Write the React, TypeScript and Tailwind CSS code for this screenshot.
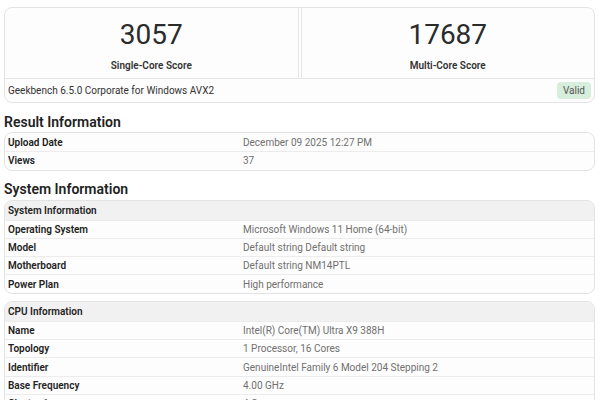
import React from "react";

type Row = { label: string; value: string };

const resultRows: Row[] = [
  { label: "Upload Date", value: "December 09 2025 12:27 PM" },
  { label: "Views", value: "37" },
];

const systemRows: Row[] = [
  { label: "Operating System", value: "Microsoft Windows 11 Home (64-bit)" },
  { label: "Model", value: "Default string Default string" },
  { label: "Motherboard", value: "Default string NM14PTL" },
  { label: "Power Plan", value: "High performance" },
];

const cpuRows: Row[] = [
  { label: "Name", value: "Intel(R) Core(TM) Ultra X9 388H" },
  { label: "Topology", value: "1 Processor, 16 Cores" },
  { label: "Identifier", value: "GenuineIntel Family 6 Model 204 Stepping 2" },
  { label: "Base Frequency", value: "4.00 GHz" },
  { label: "Cluster 1", value: "4 Cores" },
];

function InfoTable({ title, rows }: { title?: string; rows: Row[] }) {
  return (
    <div className="border border-[#e3e3e3] rounded-lg overflow-hidden bg-[#fdfdfd]">
      {title && (
        <div className="h-[19px] bg-[#f1f1f1] px-[3px] flex items-center text-[10px] font-semibold text-[#222]">
          {title}
        </div>
      )}
      {rows.map((row, i) => (
        <div
          key={row.label}
          className={`grid grid-cols-[235px_1fr] h-[18.3px] items-center px-[3px] text-[10px] ${
            i > 0 || title ? "border-t border-[#ececec]" : ""
          }`}
        >
          <span className="font-semibold text-[#222]">{row.label}</span>
          <span className="text-[#707070]">{row.value}</span>
        </div>
      ))}
    </div>
  );
}

function ScoreCell({ score, label }: { score: string; label: string }) {
  return (
    <div className="flex flex-col items-center pt-[10px]">
      <div className="text-[28px] leading-[34px] text-[#2b2b2b]">{score}</div>
      <div className="mt-[6px] text-[10px] font-semibold text-[#333]">{label}</div>
    </div>
  );
}

export default function App() {
  return (
    <div className="w-[600px] h-[400px] overflow-hidden bg-white px-[4px] pt-[7px] font-['Roboto',sans-serif] text-[#333]">
      <div className="w-[591px] border border-[#e3e3e3] rounded-lg bg-[#fdfdfd]">
        <div className="grid grid-cols-2 gap-[2px] h-[70px]">
          <div className="border-r border-[#e6e6e6]">
            <ScoreCell score="3057" label="Single-Core Score" />
          </div>
          <div className="border-l border-[#e6e6e6]">
            <ScoreCell score="17687" label="Multi-Core Score" />
          </div>
        </div>
        <div className="h-[24px] border-t border-[#e6e6e6] flex items-center justify-between pl-[3px] pr-[3px]">
          <span className="text-[10px] text-[#333]">Geekbench 6.5.0 Corporate for Windows AVX2</span>
          <span className="bg-[#d6eedb] text-[#555] text-[10px] rounded px-[6px] h-[17px] flex items-center">
            Valid
          </span>
        </div>
      </div>

      <h2 className="mt-[9px] mb-[0px] text-[14px] leading-[20px] font-semibold text-[#222]">
        Result Information
      </h2>
      <div className="w-[591px]">
        <InfoTable rows={resultRows} />
      </div>

      <h2 className="mt-[8px] mb-[1px] text-[14px] leading-[20px] font-semibold text-[#222]">
        System Information
      </h2>
      <div className="w-[591px] flex flex-col gap-[7px]">
        <InfoTable title="System Information" rows={systemRows} />
        <InfoTable title="CPU Information" rows={cpuRows} />
      </div>
    </div>
  );
}
